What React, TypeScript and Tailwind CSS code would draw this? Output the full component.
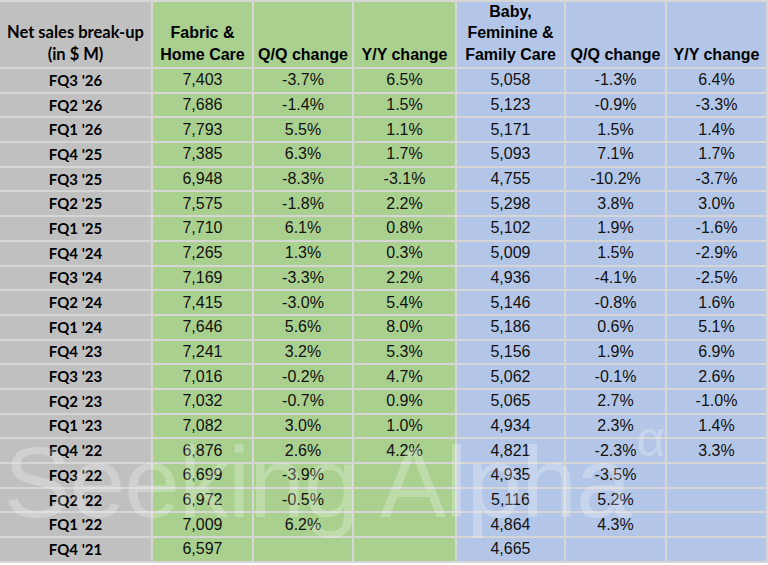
const rows: string[][] = [
  ["FQ3 '26", '7,403', '-3.7%', '6.5%', '5,058', '-1.3%', '6.4%'],
  ["FQ2 '26", '7,686', '-1.4%', '1.5%', '5,123', '-0.9%', '-3.3%'],
  ["FQ1 '26", '7,793', '5.5%', '1.1%', '5,171', '1.5%', '1.4%'],
  ["FQ4 '25", '7,385', '6.3%', '1.7%', '5,093', '7.1%', '1.7%'],
  ["FQ3 '25", '6,948', '-8.3%', '-3.1%', '4,755', '-10.2%', '-3.7%'],
  ["FQ2 '25", '7,575', '-1.8%', '2.2%', '5,298', '3.8%', '3.0%'],
  ["FQ1 '25", '7,710', '6.1%', '0.8%', '5,102', '1.9%', '-1.6%'],
  ["FQ4 '24", '7,265', '1.3%', '0.3%', '5,009', '1.5%', '-2.9%'],
  ["FQ3 '24", '7,169', '-3.3%', '2.2%', '4,936', '-4.1%', '-2.5%'],
  ["FQ2 '24", '7,415', '-3.0%', '5.4%', '5,146', '-0.8%', '1.6%'],
  ["FQ1 '24", '7,646', '5.6%', '8.0%', '5,186', '0.6%', '5.1%'],
  ["FQ4 '23", '7,241', '3.2%', '5.3%', '5,156', '1.9%', '6.9%'],
  ["FQ3 '23", '7,016', '-0.2%', '4.7%', '5,062', '-0.1%', '2.6%'],
  ["FQ2 '23", '7,032', '-0.7%', '0.9%', '5,065', '2.7%', '-1.0%'],
  ["FQ1 '23", '7,082', '3.0%', '1.0%', '4,934', '2.3%', '1.4%'],
  ["FQ4 '22", '6,876', '2.6%', '4.2%', '4,821', '-2.3%', '3.3%'],
  ["FQ3 '22", '6,699', '-3.9%', '', '4,935', '-3.5%', ''],
  ["FQ2 '22", '6,972', '-0.5%', '', '5,116', '5.2%', ''],
  ["FQ1 '22", '7,009', '6.2%', '', '4,864', '4.3%', ''],
  ["FQ4 '21", '6,597', '', '', '4,665', '', ''],
];

const labelFont = "font-['Lato','Open_Sans',sans-serif] font-bold text-[15px] text-black";
const cellFont = "font-['Liberation_Sans',Arial,sans-serif] text-[16px] text-[#111]";
const headFont = "font-['Liberation_Sans',Arial,sans-serif] font-bold text-[16px] text-black leading-[21.5px]";

function bgFor(col: number) {
  if (col === 0) return 'bg-[#c0c0c0]';
  if (col <= 3) return 'bg-[#a9d08e]';
  return 'bg-[#b4c6e7]';
}

export default function App() {
  return (
    <div className="relative w-[768px] h-[565px] bg-white overflow-hidden">
      <div className="grid grid-cols-[151px_99px_98px_101px_107px_99px_99px] grid-rows-[65px_repeat(20,22.7px)] gap-[2px] bg-[#d6d6d6] pt-[2px] pr-[2px] pb-[2px] w-[768px]">
        <div className={`${bgFor(0)} font-['Lato','Open_Sans',sans-serif] font-bold text-[16.5px] text-black leading-[21.5px] flex flex-col justify-end items-center pb-[2px] text-center`}>
          <span>Net sales break-up</span>
          <span>(in $ M)</span>
        </div>
        <div className={`${bgFor(1)} ${headFont} flex flex-col justify-end items-center pb-[2px] text-center`}>
          <span>Fabric &amp;</span>
          <span>Home Care</span>
        </div>
        <div className={`${bgFor(2)} ${headFont} flex flex-col justify-end items-center pb-[2px]`}>
          <span>Q/Q change</span>
        </div>
        <div className={`${bgFor(3)} ${headFont} flex flex-col justify-end items-center pb-[2px]`}>
          <span>Y/Y change</span>
        </div>
        <div className={`${bgFor(4)} ${headFont} flex flex-col justify-end items-center pb-[2px] text-center`}>
          <span>Baby,</span>
          <span>Feminine &amp;</span>
          <span>Family Care</span>
        </div>
        <div className={`${bgFor(5)} ${headFont} flex flex-col justify-end items-center pb-[2px]`}>
          <span>Q/Q change</span>
        </div>
        <div className={`${bgFor(6)} ${headFont} flex flex-col justify-end items-center pb-[2px]`}>
          <span>Y/Y change</span>
        </div>

        {rows.map((row) =>
          row.map((val, i) => (
            <div
              key={row[0] + i}
              className={`${bgFor(i)} ${i === 0 ? labelFont : cellFont} flex items-center justify-center leading-none`}
            >
              {val}
            </div>
          ))
        )}
      </div>

      {/* watermark */}
      <div className="pointer-events-none absolute left-[4px] top-[432px] flex items-start text-white/25 font-['Liberation_Sans',Arial,sans-serif] font-light text-[100px] leading-none tracking-[-1px] whitespace-nowrap">
        <span>Seeking Alpha</span>
        <span className="text-[50px] mt-[-18px] ml-[6px]">α</span>
      </div>
    </div>
  );
}
